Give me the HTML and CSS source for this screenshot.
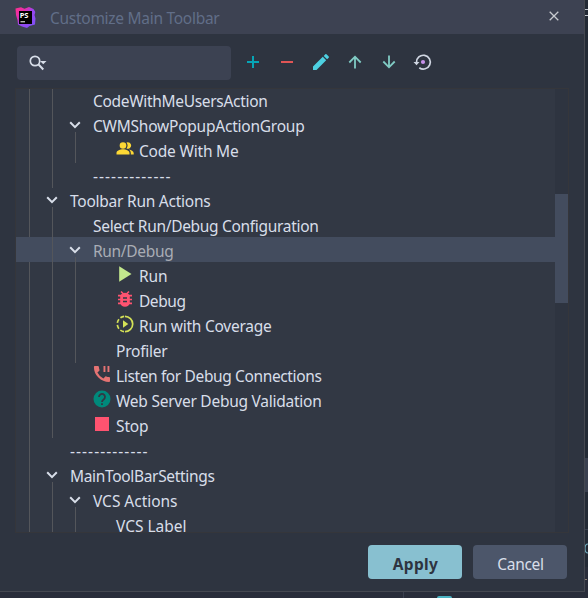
FILE: index.html
```
<!DOCTYPE html>
<html lang="en">
<head>
<meta charset="utf-8">
<title>Customize Main Toolbar</title>
<link rel="stylesheet" href="styles.css">
</head>
<body>
<svg class="backdrop" width="588" height="598" viewBox="0 0 588 598">
  <path fill="#232a35" d="M585 0h3v598h-3z"/>
  <path fill="#3a404f" d="M585 458h3v34h-3z"/>
  <path fill="#3a404f" d="M585 529h3v1h-3zM403 592h1v6h-1z"/>
  <path fill="#292d3a" d="M585 567h3v31h-3z"/>
  <path fill="#c0c4cc" d="M585 9h3v1h-3zM585 15h3v1h-3z"/>
  <path d="M588 544q-3 0-3 4.500t3 4.500" fill="none" stroke="#6fa9ba" stroke-width="1.200"/>
  <path fill="#8d7f73" d="M585 579h2v1h-2z"/>
  <path fill="#4bb3c3" d="M437 598q0-2 2-2h11q2 0 2 2z"/>
</svg>
<div class="dialog">
  <header class="titlebar">
    <svg class="logo" width="21" height="21" viewBox="0 0 21 21">
      <defs><linearGradient id="g" x1="0" y1="0" x2="1" y2="1"><stop offset="0" stop-color="#ff318c"/><stop offset=".3" stop-color="#e52fae"/><stop offset=".5" stop-color="#9a45ef"/><stop offset="1" stop-color="#7a52f5"/></linearGradient></defs>
      <path fill="url(#g)" d="M.5 1.500L6 .3l3.500 1.500L14 0l4.500 2 1.800 3-.8 3 1 3.500-.5 6-5.500 1.500-2.500 2-5-1.500-4-2-.5-4.500-1.500-5z"/>
      <path d="M4 4h13v13H4z"/>
      <text class="logo-text" x="4.700" y="10.700">PS</text>
      <path fill="#fff" d="M5.500 14.300h4.500v1H5.500z"/>
    </svg>
    <h1 class="title"><span class="t" data-w="168">Customize Main Toolbar</span></h1>
    <svg class="close" width="10" height="10" viewBox="0 0 10 10"><path d="M.7.7l8.600 8.600M9.300.7L.7 9.300" stroke="#c8cbd0" stroke-width="1.300"/></svg>
  </header>
  <div class="toolbar">
    <div class="search">
      <svg width="18" height="16" viewBox="0 0 18 16"><g fill="none" stroke="#d8dee9" stroke-width="1.700"><circle cx="6" cy="6" r="4.700"/><path d="M9.300 9.300l5 5.200" stroke-width="2"/></g><path fill="#d8dee9" d="M11 6h6.500l-3.250 3.200z"/></svg>
    </div>
    <div class="tools">
      <svg viewBox="0 0 18 18"><path d="M3 9h12M9 3v12" stroke="#06a5b6" stroke-width="2"/></svg>
      <svg viewBox="0 0 18 18"><path d="M3 9h12" stroke="#e05555" stroke-width="2"/></svg>
      <svg viewBox="0 0 18 18"><path fill="#4dd0e1" d="M1 17v-3.500L10.800 3.800l3.400 3.400L4.500 17zM11.700 2.900l1.600-1.600q.6-.6 1.200 0l2.200 2.200q.6.6 0 1.200l-1.600 1.600z"/></svg>
      <svg viewBox="0 0 18 18"><path d="M9 15.500V4M3.300 9.500L9 3.700l5.700 5.800" fill="none" stroke="#80cbc4" stroke-width="1.800"/></svg>
      <svg viewBox="0 0 18 18"><path d="M9 2.500V14M3.300 8.500L9 14.300l5.700-5.800" fill="none" stroke="#80cbc4" stroke-width="1.800"/></svg>
      <svg class="reset" viewBox="0 0 18 18"><path d="M2.500 9.500a6.900 6.900 0 1 1 2.800 5.200" fill="none" stroke="#d0d6e2" stroke-width="1.700"/><path fill="#d0d6e2" d="M-.5 9h6l-3 3.200z"/><circle cx="9" cy="9" r="2.100" fill="#c792ea"/></svg>
    </div>
  </div>
  <div class="list">
    <div class="tree">
      <div class="group root">
        <div class="group">
          <div class="row"><span class="t" data-w="173">CodeWithMeUsersAction</span></div>
          <div class="row parent"><svg class="chevron" viewBox="0 0 12 8"><path d="M1.200 1.300L6 6.100l4.800-4.800"/></svg><span class="t" data-w="210">CWMShowPopupActionGroup</span></div>
          <div class="group">
            <div class="row"><svg class="icon" viewBox="0 0 18 18"><g fill="#fdd835"><circle cx="7" cy="5.500" r="3.300"/><path d="M.5 14.500V13c0-2.500 4-3.700 6.500-3.700s6.500 1.200 6.500 3.700v1.500zM10.500 2.500a3.300 3.300 0 1 1 0 6q2.200-3 0-6zM13 9.500c2 .4 4.700 1.500 4.700 3.500v1.500h-2.900V13q0-2.200-1.800-3.500z"/></g></svg><span class="t" data-w="98">Code With Me</span></div>
          </div>
          <div class="row"><span class="t" data-w="77">-------------</span></div>
        </div>
        <div class="row parent"><svg class="chevron" viewBox="0 0 12 8"><path d="M1.200 1.300L6 6.100l4.800-4.800"/></svg><span class="t" data-w="139">Toolbar Run Actions</span></div>
        <div class="group">
          <div class="row"><span class="t" data-w="224">Select Run/Debug Configuration</span></div>
          <div class="row parent selected"><svg class="chevron" viewBox="0 0 12 8"><path d="M1.200 1.300L6 6.100l4.800-4.800"/></svg><span class="t" data-w="79">Run/Debug</span></div>
          <div class="group">
            <div class="row"><svg class="icon" viewBox="0 0 18 18"><path fill="#c3e88d" d="M3.200 1.200L15.500 9 3.200 16.800z"/></svg><span class="t" data-w="27">Run</span></div>
            <div class="row"><svg class="icon" viewBox="0 0 18 18"><path fill="#ff5370" d="M5 4.500Q9 1 13 4.500l.8 2v6Q13 16.800 9 16.800t-4.800-4.300v-6z"/><path d="M2 5.700h14M2 9.500h14M2 13.300h14M5 1.500l2.500 2.500M13 1.500L10.500 4" stroke="#ff5370" stroke-width="1.700"/><path d="M7 8h4M7 11.500h4" stroke="#323844" stroke-width="1.500"/></svg><span class="t" data-w="45">Debug</span></div>
            <div class="row"><svg class="icon" viewBox="0 0 18 18"><path d="M9 1.300a7.700 7.700 0 0 1 0 15.400" fill="none" stroke="#d4e157" stroke-width="1.700"/><path d="M9 16.700A7.700 7.700 0 0 1 9 1.300" fill="none" stroke="#d4e157" stroke-width="1.700" stroke-dasharray="4 2.050" stroke-dashoffset="-1"/><path fill="#d4e157" d="M7 5.200L12.300 9 7 12.800z"/></svg><span class="t" data-w="131">Run with Coverage</span></div>
            <div class="row"><span class="t" data-w="50">Profiler</span></div>
          </div>
          <div class="row"><svg class="icon" viewBox="0 0 18 18"><path fill="#e57373" d="M1.800 1H5q.8 0 .9.900.1 1.500.6 2.800.2.600-.2 1L4.400 7.500q2 4 6 6l1.900-1.900q.4-.4 1-.2 1.300.5 2.800.6.900.1.900.9v3.200q0 .9-.9.900A15.200 15.200 0 0 1 .9 1.900Q.9 1 1.800 1zM10.500 1h1.900v6h-1.900zM14.500 1h1.900v6h-1.900z"/></svg><span class="t" data-w="204">Listen for Debug Connections</span></div>
          <div class="row"><svg class="icon" viewBox="0 0 18 18"><circle cx="9" cy="9" r="8.500" fill="#00897b"/><path d="M6 7a3 3 0 1 1 4.900 2.200Q9 10.500 9 12" fill="none" stroke="#323844" stroke-width="1.800"/><path fill="#323844" d="M8.100 13.200h1.800V15H8.100z"/></svg><span class="t" data-w="204">Web Server Debug Validation</span></div>
          <div class="row"><svg class="icon" viewBox="0 0 18 18"><path fill="#ff5370" d="M2 2h14v14H2z"/></svg><span class="t" data-w="31">Stop</span></div>
        </div>
        <div class="row"><span class="t" data-w="77">-------------</span></div>
        <div class="row parent"><svg class="chevron" viewBox="0 0 12 8"><path d="M1.200 1.300L6 6.100l4.800-4.800"/></svg><span class="t" data-w="143">MainToolBarSettings</span></div>
        <div class="group">
          <div class="row parent"><svg class="chevron" viewBox="0 0 12 8"><path d="M1.200 1.300L6 6.100l4.800-4.800"/></svg><span class="t" data-w="83">VCS Actions</span></div>
          <div class="group">
            <div class="row"><span class="t" data-w="69">VCS Label</span></div>
          </div>
        </div>
      </div>
    </div>
    <div class="scrollbar"><div class="thumb"></div></div>
  </div>
  <footer class="buttons">
    <button class="btn primary"><span class="t" data-w="44">Apply</span></button>
    <button class="btn"><span class="t" data-w="45">Cancel</span></button>
  </footer>
</div>
<script src="fit.js"></script>
</body>
</html>
```
FILE: fit.js
```
// Track each label so that it fills its designed width.
document.querySelectorAll('.t').forEach(function (el) {
  var n = el.textContent.length;
  var extra = Number(el.dataset.w) + 1.5 - el.getBoundingClientRect().width;
  el.style.letterSpacing = (extra / n).toFixed(3) + 'px';
});
```
FILE: styles.css
```
* { box-sizing: border-box; }
body {
  margin: 0;
  height: 598px;
  overflow: hidden;
  background: #292d3a;
  font: 15.5px/25px "Noto Sans", "Open Sans", sans-serif;
  color: #d8dee9;
}
.backdrop { position: absolute; top: 0; left: 0; }
.dialog {
  position: relative;
  width: 585px;
  height: 592px;
  display: flex;
  flex-direction: column;
  background: #2e3440;
  border: solid #454850;
  border-width: 0 1px 1px 0;
}
.titlebar {
  height: 34px;
  display: flex;
  align-items: center;
  padding: 0 25px 0 15px;
  background: #3d4252;
}
.logo { margin-right: 14px; }
.logo-text { font: bold 7.5px "Noto Sans", sans-serif; fill: #fff; }
.title { margin: 3px auto 0 0; font-size: 15.5px; font-weight: 400; color: #616e88; }
.close { margin-bottom: 2px; }
.toolbar { height: 54px; display: flex; padding: 12px 17px 0; }
.search {
  width: 214px;
  height: 34px;
  padding: 9px 12px;
  border-radius: 4px;
  background: #3c4252;
}
.search svg { display: block; }
.tools { display: flex; gap: 16px; padding: 7px 0 0 13px; }
.tools svg { width: 18px; height: 18px; }
.reset { overflow: visible; }
.list {
  width: 554px;
  height: 445px;
  margin-left: 15px;
  border: 1px solid #35363b;
  display: flex;
  overflow: hidden;
  background: #323844;
}
.tree { width: 539px; margin-top: -2px; white-space: nowrap; }
.row {
  height: 25px;
  display: flex;
  align-items: center;
  padding-left: calc(8px + var(--level) * 23px);
}
.row .t { position: relative; top: 2px; }
.group { position: relative; --level: 3; }
.root { --level: 2; }
.root > .group { --level: 3; }
.root > .group > .group { --level: 4; }
.group::before {
  content: "";
  position: absolute;
  left: calc(-33px + var(--level) * 23px);
  top: -5px;
  bottom: -1px;
  width: 1px;
  background: #54565b;
}
.chevron {
  width: 12px;
  height: 8px;
  margin: 0 12px 0 -24px;
  fill: none;
  stroke: #d8dee9;
  stroke-width: 2;
}
.icon { width: 18px; height: 18px; margin: 0 5px 1px 0; }
.selected { background: #434c5e; color: #a9adb5; }
.scrollbar { width: 13px; padding-top: 105px; background: #2e3440; }
.thumb { height: 109px; background: #434c5e; }
.buttons { display: flex; justify-content: flex-end; gap: 11px; padding: 12px 17px 0 0; }
.btn {
  width: 94px;
  height: 34px;
  padding: 4px 0 0 1px;
  border: 0;
  border-radius: 4px;
  background: #4c566a;
  color: #d8dee9;
  font: inherit;
}
.primary { background: #88c0d0; color: #2e3440; font-weight: 700; }
```
